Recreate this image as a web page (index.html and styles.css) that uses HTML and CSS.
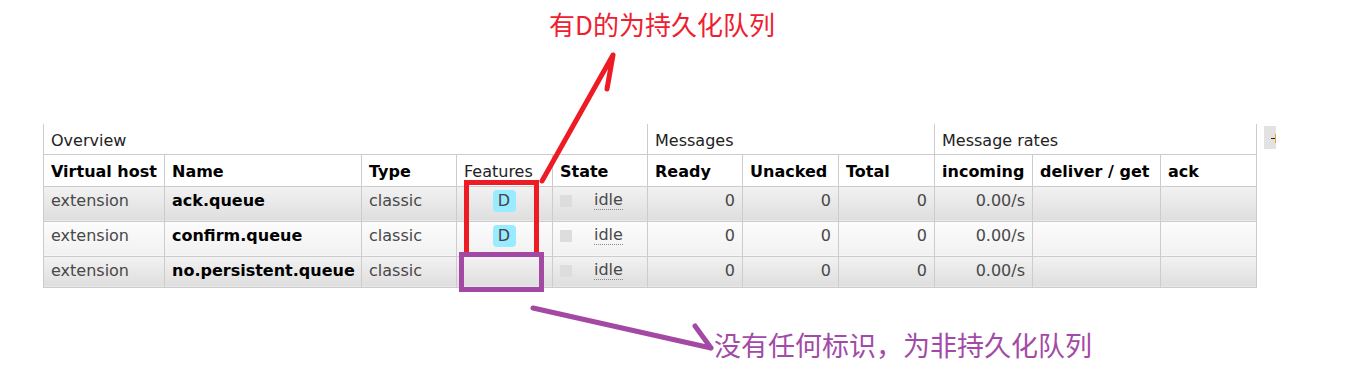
FILE: index.html
```html
<!DOCTYPE html>
<html lang="zh-CN">
<head>
    <meta charset="UTF-8">
    <title>Queues</title>
    <link rel="stylesheet" href="styles.css">
</head>
<body>
    <div class="page">
        <div class="queues">
            <table class="list">
                <colgroup>
                    <col class="c-vhost"><col class="c-name"><col class="c-type"><col class="c-feat"><col class="c-state">
                    <col class="c-ready"><col class="c-unacked"><col class="c-total">
                    <col class="c-in"><col class="c-deliver"><col class="c-ack">
                </colgroup>
                <thead>
                    <tr class="group">
                        <th colspan="5">Overview</th>
                        <th colspan="3">Messages</th>
                        <th colspan="3">Message rates</th>
                    </tr>
                    <tr class="cols">
                        <th>Virtual host</th>
                        <th>Name</th>
                        <th>Type</th>
                        <th class="plain">Features</th>
                        <th>State</th>
                        <th>Ready</th>
                        <th>Unacked</th>
                        <th>Total</th>
                        <th>incoming</th>
                        <th>deliver / get</th>
                        <th>ack</th>
                    </tr>
                </thead>
                <tbody>
                    <tr class="alt1">
                        <td>extension</td>
                        <td class="name">ack.queue</td>
                        <td>classic</td>
                        <td class="feat"><span class="badge">D</span></td>
                        <td><div class="state"><span class="dot"></span><abbr>idle</abbr></div></td>
                        <td class="r">0</td>
                        <td class="r">0</td>
                        <td class="r">0</td>
                        <td class="r">0.00/s</td>
                        <td></td>
                        <td></td>
                    </tr>
                    <tr class="alt2">
                        <td>extension</td>
                        <td class="name">confirm.queue</td>
                        <td>classic</td>
                        <td class="feat"><span class="badge">D</span></td>
                        <td><div class="state"><span class="dot"></span><abbr>idle</abbr></div></td>
                        <td class="r">0</td>
                        <td class="r">0</td>
                        <td class="r">0</td>
                        <td class="r">0.00/s</td>
                        <td></td>
                        <td></td>
                    </tr>
                    <tr class="alt1 last">
                        <td>extension</td>
                        <td class="name">no.persistent.queue</td>
                        <td>classic</td>
                        <td class="feat"></td>
                        <td><div class="state"><span class="dot"></span><abbr>idle</abbr></div></td>
                        <td class="r">0</td>
                        <td class="r">0</td>
                        <td class="r">0</td>
                        <td class="r">0.00/s</td>
                        <td></td>
                        <td></td>
                    </tr>
                </tbody>
            </table>
            <div class="toggle" title="+/-"></div>
        </div>
    </div>

    <svg class="notes" width="1360" height="372" viewBox="0 0 1360 372">
        <!-- red note: durable -->
        <rect x="466.5" y="182.5" width="70" height="72" fill="none" stroke="#ed1c24" stroke-width="5"/>
        <path d="M542 181 L613 55 M613 55 L607 89" fill="none" stroke="#ed1c24" stroke-width="5" stroke-linecap="round"/>
        <text class="note red" x="549" y="35">有D的为持久化队列</text>
        <!-- purple note: non durable -->
        <rect x="461.5" y="254.5" width="80" height="35" fill="none" stroke="#a349a4" stroke-width="5"/>
        <path d="M533 308 L711 348 M695 326 L711 348" fill="none" stroke="#a349a4" stroke-width="5" stroke-linecap="round"/>
        <text class="note purple" x="714" y="356">没有任何标识，为非持久化队列</text>
    </svg>
</body>
</html>
```

FILE: styles.css
```css
* {
    margin: 0;
    padding: 0;
    box-sizing: border-box;
}

body {
    background: #fff;
    font-family: 'DejaVu Sans', Verdana, sans-serif;
    font-size: 16px;
    color: #484848;
    width: 1360px;
    height: 372px;
    overflow: hidden;
    position: relative;
}

.page {
    padding: 124px 0 0 43px;
}

.queues {
    display: flex;
    align-items: flex-start;
    gap: 7px;
}

table.list {
    border-collapse: collapse;
    table-layout: fixed;
    width: 1213px;
}

.c-vhost { width: 121px; }
.c-name { width: 197px; }
.c-type { width: 95px; }
.c-feat { width: 96px; }
.c-state { width: 95px; }
.c-ready { width: 95px; }
.c-unacked { width: 96px; }
.c-total { width: 96px; }
.c-in { width: 98px; }
.c-deliver { width: 128px; }
.c-ack { width: 96px; }

th, td {
    border: 1px solid #ccc;
    text-align: left;
    white-space: nowrap;
    overflow: hidden;
}

tr.group th {
    font-weight: normal;
    color: #222;
    height: 30px;
    padding: 3px 7px 0;
    border-top: none;
    border-right: none;
}

tr.group th:last-child {
    border-right: 1px solid #ccc;
}

tr.cols th {
    color: #000;
    font-weight: bold;
    height: 32px;
    padding: 2px 7px 0;
}

tr.cols th.plain {
    font-weight: normal;
    color: #222;
}

td {
    height: 35px;
    padding: 0 7px 6px;
    vertical-align: middle;
}

tr.last td {
    height: 31px;
    padding-bottom: 2px;
}

tr.alt1 td {
    background: linear-gradient(to bottom, #f2f2f2, #dedede);
}

tr.alt2 td {
    background: linear-gradient(to bottom, #fcfcfc, #f1f1f1);
}

td.name {
    color: #000;
    font-weight: bold;
}

td.r {
    text-align: right;
}

td.feat {
    text-align: center;
}

.badge {
    display: inline-block;
    width: 23px;
    height: 22px;
    line-height: 22px;
    border-radius: 4px;
    background: #99ebff;
    color: #444;
    text-align: center;
    margin-left: -1px;
}

.state {
    display: flex;
    align-items: center;
}

.dot {
    width: 12px;
    height: 12px;
    background: #ddd;
    margin-right: 22px;
}

.state abbr {
    text-decoration: none;
    border-bottom: 1px dotted #888;
    line-height: 18px;
}

/* column chooser, cut at the right edge of the capture */
.toggle {
    position: relative;
    width: 12px;
    height: 23px;
    margin-top: 2px;
    background: #e2e2e2;
}

.toggle::before {
    content: '';
    position: absolute;
    left: 7px;
    top: 12px;
    width: 5px;
    height: 1px;
    background: #222;
}

.toggle::after {
    content: '';
    position: absolute;
    right: 0;
    top: 8px;
    width: 1px;
    height: 9px;
    background: #f0a030;
}

.notes {
    position: absolute;
    left: 0;
    top: 0;
    pointer-events: none;
}

.note {
    font-family: 'Noto Sans CJK SC', 'Noto Sans', sans-serif;
    font-size: 26px;
}

.note.red {
    fill: #ee2030;
}

.note.purple {
    fill: #a34aa8;
    font-size: 27px;
}
```
